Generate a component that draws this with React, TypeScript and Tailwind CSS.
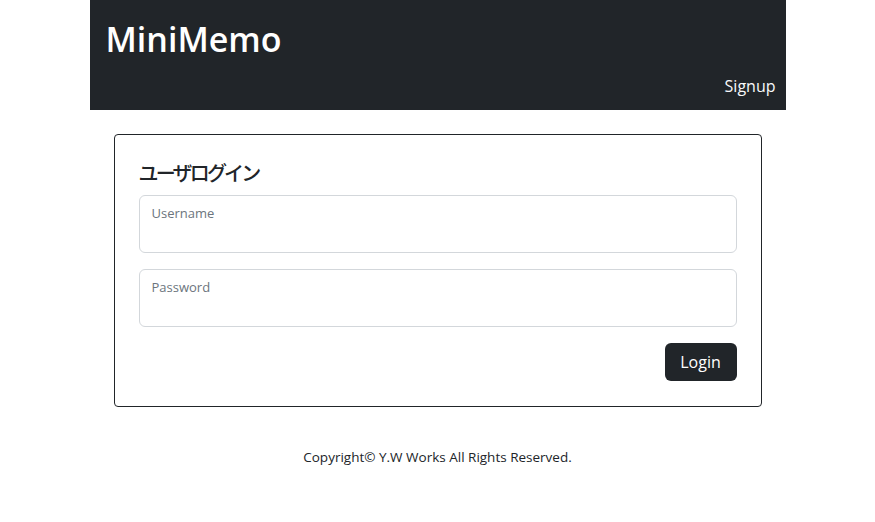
import React from 'react';

const font = { fontFamily: '"Open Sans", "Noto Sans CJK JP", sans-serif' };

const FloatingInput: React.FC<{ label: string; type?: string }> = ({ label, type = 'text' }) => (
  <div className="relative">
    <input
      type={type}
      className="block h-[58px] w-full rounded-[6px] border border-[#d3d7db] bg-white px-3 pt-[26px] pb-[6px] text-[16px] text-[#212529] outline-none"
    />
    <label className="pointer-events-none absolute left-[13px] top-[9px] text-[13px] text-[#6c757d]">
      {label}
    </label>
  </div>
);

export default function App() {
  return (
    <div className="min-h-[522px] bg-white text-[#212529]" style={font}>
      <div className="mx-auto w-[696px]">
        {/* navbar */}
        <header className="flex h-[110px] flex-col bg-[#212529] text-white">
          <h1 className="pl-4 pt-[16px] text-[34px] font-semibold leading-[46px]">MiniMemo</h1>
          <nav className="mt-auto flex justify-end pr-[10px] pb-[12px]">
            <a className="text-[16px] leading-[24px] text-[#f8f9fa]">Signup</a>
          </nav>
        </header>

        {/* login card */}
        <div className="mx-6 mt-6 rounded-[4px] border border-[#212529] px-6 pt-[24px] pb-[25px]">
          <h2 className="mb-[6px] text-[20px] font-medium leading-[30px] tracking-[-2.8px]">ユーザログイン</h2>
          <form className="flex flex-col gap-4">
            <FloatingInput label="Username" />
            <FloatingInput label="Password" type="password" />
            <div className="flex justify-end">
              <button
                type="button"
                className="h-[38px] w-[72px] rounded-[6px] bg-[#212529] text-[16px] text-white"
              >
                Login
              </button>
            </div>
          </form>
        </div>

        <footer className="mt-[40px] text-center text-[13.5px] leading-[20px]">
          Copyright© Y.W Works All Rights Reserved.
        </footer>
      </div>
    </div>
  );
}
